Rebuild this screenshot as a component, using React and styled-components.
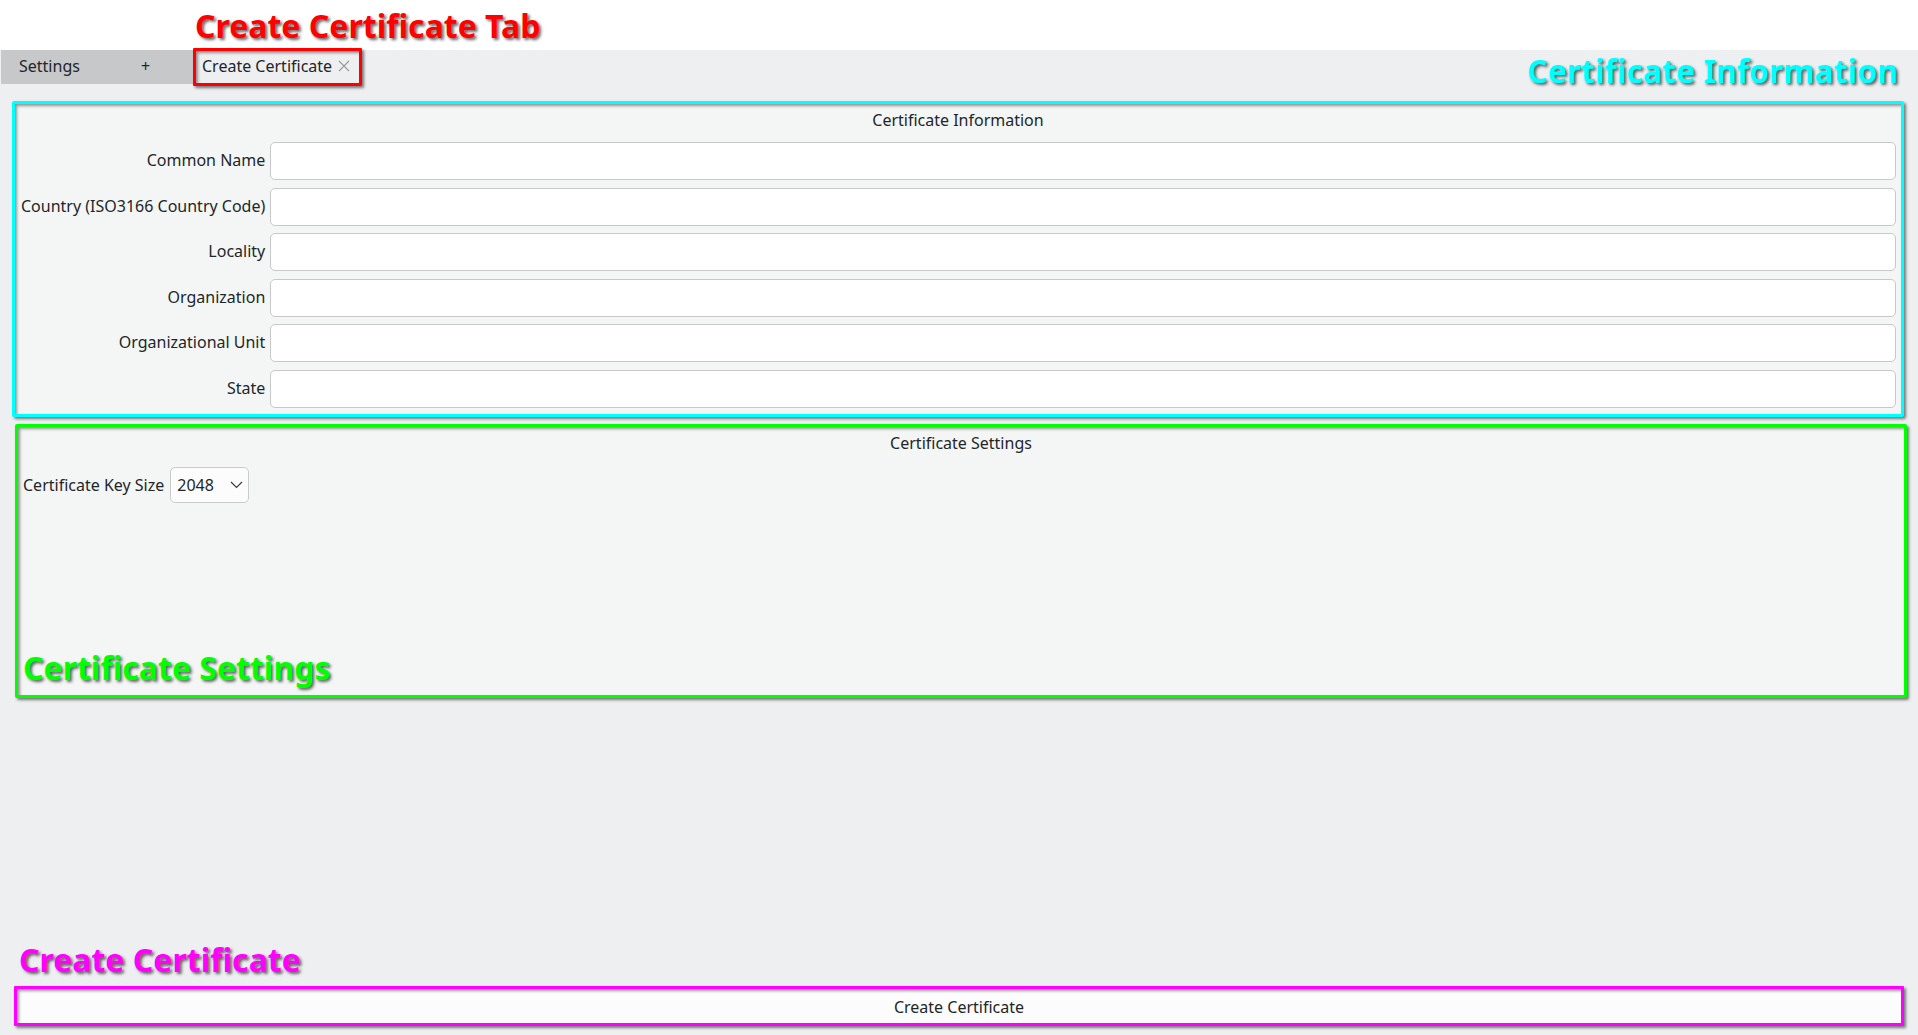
import React from "react";
import styled, { createGlobalStyle } from "styled-components";

const GlobalStyle = createGlobalStyle`
  * { box-sizing: border-box; }
  body {
    margin: 0;
    background: #eeeff1;
    color: #232629;
    font: 16px/22px "Noto Sans", sans-serif;
  }
  button, input, select { font: inherit; color: inherit; }
`;

const Page = styled.div`
  display: flex;
  flex-direction: column;
  min-height: 100vh;
`;

const Header = styled.header`
  height: 50px;
  padding: 4px 195px;
  background: #ffffff;
`;

const Caption = styled.h2`
  margin: 0;
  font-size: 32px;
  font-weight: 700;
  line-height: 44px;
  white-space: nowrap;
  color: ${(p) => p.$color};
  text-shadow: 2px 2px 3px rgba(0, 0, 0, 0.6);
`;

const TabBar = styled.nav`
  display: flex;
  align-items: flex-start;
  height: 51px;
  padding: 0 20px 0 1px;
`;

const Tab = styled.button`
  width: ${(p) => p.$width}px;
  height: 34px;
  padding: 0 18px 2px;
  border: 0;
  background: #c6c8ca;
  text-align: ${(p) => p.$align || "left"};
`;

const ActiveTab = styled.div`
  position: relative;
  display: flex;
  align-items: center;
  gap: 6px;
  width: 169px;
  height: 34px;
  padding: 0 0 2px 9px;

  &::after {
    content: "";
    position: absolute;
    inset: -2px 0;
    border: 3px solid #ff0000;
    border-radius: 1px;
    box-shadow: 2px 2px 3px rgba(0, 0, 0, 0.5), inset 2px 2px 3px rgba(0, 0, 0, 0.4);
    pointer-events: none;
  }
`;

const TabLabel = styled.button`
  padding: 0;
  border: 0;
  background: none;
  white-space: nowrap;
`;

const CloseButton = styled.button`
  display: flex;
  padding: 0;
  border: 0;
  background: none;
`;

const BarCaption = styled.div`
  margin: -1px 0 0 auto;
`;

const Main = styled.main`
  display: flex;
  flex: 1;
  flex-direction: column;
  padding: 0 11px 9px 12px;
`;

const Panel = styled.section`
  display: flex;
  flex-direction: column;
  padding: 5px 5px 6px;
  border: 3px solid ${(p) => p.$color};
  border-radius: 2px;
  background: #f4f6f6;
  box-shadow: 2px 2px 3px rgba(0, 0, 0, 0.5), inset 2px 2px 3px rgba(0, 0, 0, 0.4);
`;

const InfoPanel = styled(Panel)`
  margin-right: 3px;
`;

const SettingsPanel = styled(Panel)`
  min-height: 274px;
  margin: 7px 0 0 3px;
  padding-bottom: 5px;
`;

const PanelTitle = styled.h3`
  margin: 0 0 11px;
  font-size: 16px;
  font-weight: 400;
  text-align: center;
`;

const Fields = styled.div`
  display: grid;
  grid-template-columns: max-content 1fr;
  align-content: space-between;
  align-items: center;
  column-gap: 5px;
  height: 266px;
  padding-left: 1px;
`;

const FieldLabel = styled.label`
  padding-bottom: 2px;
  text-align: right;
`;

const TextInput = styled.input`
  width: 100%;
  height: 38px;
  padding: 0 8px;
  border: 1px solid #c6c8c9;
  border-radius: 5px;
  background: #ffffff;
`;

const SettingRow = styled.div`
  display: flex;
  align-items: center;
  gap: 6px;
  padding: 2px 0;
`;

const SelectBox = styled.div`
  display: grid;
  align-items: center;
  width: 79px;

  > * { grid-area: 1 / 1; }
  > svg { justify-self: end; margin-right: 6px; pointer-events: none; }
`;

const Select = styled.select`
  appearance: none;
  width: 100%;
  height: 36px;
  padding: 0 6px;
  border: 1px solid #c9cbcc;
  border-radius: 5px;
  background: #fcfcfc;
`;

const PanelCaption = styled.div`
  margin-top: auto;
`;

const Footer = styled.footer`
  margin: auto 3px 0 2px;
`;

const FooterCaption = styled.div`
  padding: 0 5px 4px;
`;

const SubmitButton = styled.button`
  display: block;
  width: 100%;
  height: 40px;
  padding: 2px 0 0;
  border: 3px solid #ff00ff;
  border-radius: 1px;
  background: #fcfcfc;
  box-shadow: 2px 2px 3px rgba(0, 0, 0, 0.5), inset 2px 2px 3px rgba(0, 0, 0, 0.4);
`;

const FIELDS = [
  ["common-name", "Common Name"],
  ["country", "Country (ISO3166 Country Code)"],
  ["locality", "Locality"],
  ["organization", "Organization"],
  ["organizational-unit", "Organizational Unit"],
  ["state", "State"],
];

export default function App() {
  return (
    <Page>
      <GlobalStyle />
      <Header>
        <Caption $color="#ff0000">Create Certificate Tab</Caption>
      </Header>
      <TabBar>
        <Tab $width={97}>Settings</Tab>
        <Tab $width={95} $align="center">+</Tab>
        <ActiveTab>
          <TabLabel>Create Certificate</TabLabel>
          <CloseButton aria-label="Close tab">
            <svg width="12" height="12" viewBox="0 0 12 12" fill="none" stroke="#9a9c9e" strokeWidth="1.2">
              <path d="M1 1 11 11M11 1 1 11" />
            </svg>
          </CloseButton>
        </ActiveTab>
        <BarCaption>
          <Caption $color="#00ffff">Certificate Information</Caption>
        </BarCaption>
      </TabBar>
      <Main>
        <InfoPanel $color="#00ffff">
          <PanelTitle>Certificate Information</PanelTitle>
          <Fields>
            {FIELDS.map(([id, label]) => (
              <React.Fragment key={id}>
                <FieldLabel htmlFor={id}>{label}</FieldLabel>
                <TextInput id={id} type="text" />
              </React.Fragment>
            ))}
          </Fields>
        </InfoPanel>
        <SettingsPanel $color="#00ff00">
          <PanelTitle>Certificate Settings</PanelTitle>
          <SettingRow>
            <label htmlFor="key-size">Certificate Key Size</label>
            <SelectBox>
              <Select id="key-size" defaultValue="2048">
                <option>2048</option>
                <option>4096</option>
              </Select>
              <svg width="13" height="8" viewBox="0 0 13 8" fill="none" stroke="#3b3e41" strokeWidth="1.2">
                <path d="M1 1 6.5 6.5 12 1" />
              </svg>
            </SelectBox>
          </SettingRow>
          <PanelCaption>
            <Caption $color="#00ff00">Certificate Settings</Caption>
          </PanelCaption>
        </SettingsPanel>
        <Footer>
          <FooterCaption>
            <Caption $color="#ff00ff">Create Certificate</Caption>
          </FooterCaption>
          <SubmitButton type="button">Create Certificate</SubmitButton>
        </Footer>
      </Main>
    </Page>
  );
}
